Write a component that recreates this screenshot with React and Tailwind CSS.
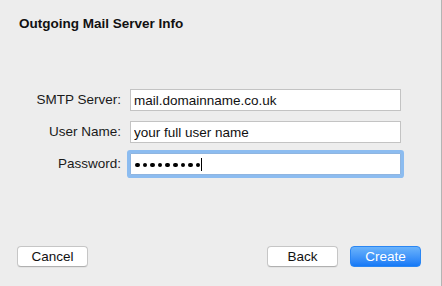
import React from 'react';

const font = { fontFamily: '"Liberation Sans", Arial, sans-serif' };

const Field = ({ label, value }) => (
    <div className="flex items-center h-[22px] gap-[9px]">
        <label className="w-[121px] text-right text-[13.5px] leading-[16px] text-[#1a1a1a]">{label}</label>
        <input
            readOnly
            value={value}
            className="w-[271px] h-[22px] border border-[#c3c3c3] bg-white px-[3px] text-[13.5px] text-[#111] outline-none"
            style={font}
        />
    </div>
);

export default function App() {
    return (
        <div className="w-[442px] h-[286px] bg-[#ededed] border-r border-[#b4b4b4] flex flex-col" style={font}>
            <h1 className="pl-[19px] pt-[16px] text-[13.5px] leading-[16px] font-bold text-[#111]">
                Outgoing Mail Server Info
            </h1>

            <div className="mt-[57px] flex flex-col gap-[10px]">
                <Field label="SMTP Server:" value="mail.domainname.co.uk" />
                <Field label="User Name:" value="your full user name" />
                <div className="flex items-center h-[22px] gap-[9px]">
                    <label className="w-[121px] text-right text-[13.5px] leading-[16px] text-[#1a1a1a]">Password:</label>
                    <div className="w-[271px] h-[22px] border border-[#8fb5e0] bg-white rounded-[1px] shadow-[0_0_0_3px_#8cbcf0] flex items-center pl-[4px]">
                        <div className="flex items-center gap-[3px] mt-[2px]">
                            {Array.from({ length: 9 }).map((_, i) => (
                                <span key={i} className="w-[4.6px] h-[4.6px] rounded-full bg-black" />
                            ))}
                        </div>
                        <span className="ml-[1px] w-px h-[13px] bg-black mt-[1px]" />
                    </div>
                </div>
            </div>

            <div className="mt-auto mb-[19px] flex items-center pl-[17px] pr-[20px]">
                <button className="w-[71px] h-[21px] rounded-[4px] bg-white border border-[#c6c6c6] border-b-[#b0b0b0] text-[13.5px] leading-[16px] text-[#111] shadow-[0_1px_0_rgba(0,0,0,0.04)]">
                    Cancel
                </button>
                <div className="flex-1" />
                <button className="w-[71px] h-[21px] rounded-[4px] bg-white border border-[#c6c6c6] border-b-[#b0b0b0] text-[13.5px] leading-[16px] text-[#111] shadow-[0_1px_0_rgba(0,0,0,0.04)]">
                    Back
                </button>
                <button className="ml-[12px] w-[71px] h-[21px] rounded-[4px] bg-gradient-to-b from-[#6ab3fb] to-[#1479f6] border border-[#2a86f3] text-[13.5px] leading-[16px] text-white">
                    Create
                </button>
            </div>
        </div>
    );
}
